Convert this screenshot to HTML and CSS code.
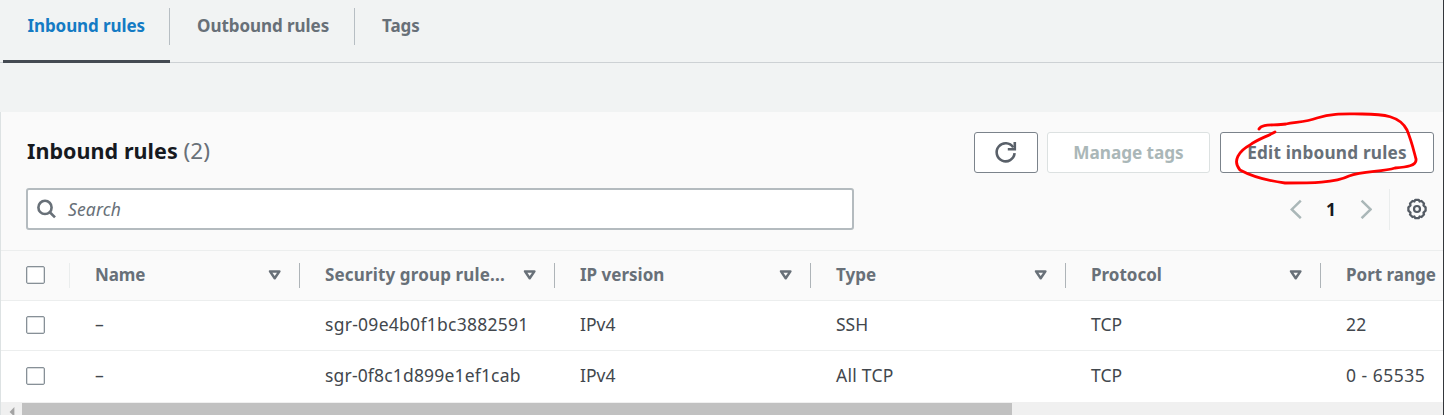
FILE: index.html
```html
<!DOCTYPE html>
<html lang="en">
<head>
<meta charset="utf-8">
<title>Inbound rules</title>
<link rel="stylesheet" href="styles.css">
</head>
<body>
<svg class="defs" width="0" height="0">
  <symbol id="sort" viewBox="0 0 14 12"><path d="M2 2.400h9.400L6.700 9.300z" fill="none" stroke="currentColor" stroke-width="2.500" stroke-linejoin="round"/></symbol>
</svg>
<div class="page">
  <nav class="tabs">
    <a class="tab tab-active">Inbound rules</a>
    <a class="tab tab-outbound">Outbound rules</a>
    <a class="tab tab-tags">Tags</a>
  </nav>
  <section class="panel">
    <header class="panel-head">
      <h2 class="title">Inbound rules <span class="count">(2)</span></h2>
      <div class="actions">
        <button class="btn btn-refresh" aria-label="Refresh"><svg width="24" height="24" viewBox="0 0 24 24" fill="none" stroke="currentColor" stroke-width="2.600"><path d="M20.600 13.200A9 9 0 1 1 19.200 7.400"/><path d="M20.800 2v7.200h-7"/></svg></button>
        <button class="btn btn-disabled">Manage tags</button>
        <button class="btn btn-edit">Edit inbound rules</button>
      </div>
    </header>
    <div class="filters">
      <div class="search">
        <svg width="20" height="20" viewBox="0 0 20 20" fill="none" stroke="currentColor" stroke-width="2.600"><circle cx="8" cy="8.400" r="6.600"/><path d="M12.600 13l5.400 5.400"/></svg>
        <span>Search</span>
      </div>
      <div class="pager">
        <svg class="arrow" width="12" height="20" viewBox="0 0 12 20"><path d="M10.800 1.600L1.800 10.400l9 8.800"/></svg>
        <b class="page-no">1</b>
        <svg class="arrow" width="12" height="20" viewBox="0 0 12 20"><path d="M1.600 1.600L10.600 10.400l-9 8.800"/></svg>
        <div class="prefs"><svg width="22" height="22" viewBox="0 0 22 22" fill="none" stroke="currentColor" stroke-width="2.300" stroke-linejoin="round"><path d="M9.300 1.800h3.400l.9 1.700 1.900-.5 2.500 2.500-.5 1.900 2.100 1.900v3.400l-2.100 1.900.5 1.900-2.500 2.500-1.900-.5-.9 1.700H9.300l-.9-1.700-1.900.5L4 16.500l.5-1.900-2.100-1.900V9.300l2.100-1.900L4 5.500 6.500 3l1.900.5z"/><circle cx="11" cy="11" r="3" stroke-width="2.200"/></svg></div>
      </div>
    </div>
    <div class="table">
      <div class="row head">
        <div class="cell check"><i class="box"></i></div>
        <div class="cell"><span class="tight">Name</span><svg class="sort"><use href="#sort"/></svg></div>
        <div class="cell"><span class="h-sgr">Security group rule...</span><svg class="sort"><use href="#sort"/></svg></div>
        <div class="cell"><span>IP version</span><svg class="sort"><use href="#sort"/></svg></div>
        <div class="cell"><span>Type</span><svg class="sort"><use href="#sort"/></svg></div>
        <div class="cell"><span>Protocol</span><svg class="sort"><use href="#sort"/></svg></div>
        <div class="cell last"><span>Port range</span></div>
      </div>
      <div class="row">
        <div class="cell check"><i class="box"></i></div>
        <div class="cell">–</div>
        <div class="cell wide">sgr-09e4b0f1bc3882591</div>
        <div class="cell">IPv4</div>
        <div class="cell">SSH</div>
        <div class="cell">TCP</div>
        <div class="cell wide">22</div>
      </div>
      <div class="row row-last">
        <div class="cell check"><i class="box"></i></div>
        <div class="cell">–</div>
        <div class="cell sgr-b">sgr-0f8c1d899e1ef1cab</div>
        <div class="cell">IPv4</div>
        <div class="cell wide">All TCP</div>
        <div class="cell">TCP</div>
        <div class="cell ports">0 - 65535</div>
      </div>
    </div>
    <div class="scrollbar"><svg width="22" height="13" viewBox="0 0 22 13"><path d="M14 4v10L9 9z" fill="#a3a3a3"/></svg><div class="thumb"></div></div>
  </section>
  <svg class="scribble" width="200" height="80" viewBox="1230 105 200 80"><path d="M1259 129C1262 123 1274 126 1286 124C1296 122 1306 122 1317 118C1333 113 1344 114 1362 114C1384 114 1400 116 1407 130C1412 142 1414 152 1416 159C1417 166 1406 167 1395 168C1382 172 1363 171 1349 176C1335 183 1311 183 1285 183C1270 181 1251 176 1240 170C1232 161 1239 151 1250 145C1258 139 1266 137 1275 132"/></svg>
</div>
</body>
</html>
```
FILE: styles.css
```css
* { box-sizing: border-box; }
body { margin: 0; font-family: "Noto Sans", sans-serif; font-size: 17.5px; color: #42474d; }
.defs { position: absolute; }
.page { position: relative; width: 1444px; height: 415px; overflow: hidden; background: #f1f3f3; border-right: 1px solid #34373b; display: flex; flex-direction: column; }
.tabs { display: flex; height: 63px; flex: none; border-bottom: 1px solid #cdd1d4; padding-left: 3px; font-size: 17px; font-weight: 700; letter-spacing: -.05px; color: #687078; }
.tab { position: relative; height: 62px; padding: 13px 25px 0 27px; line-height: 26px; white-space: nowrap; }
.tab-active { width: 167px; padding-left: 24.5px; color: #147bc4; border-bottom: 3px solid #444a52; height: 63px; letter-spacing: -.1px; }
.tab-outbound { width: 185px; }
.tab-active::after, .tab-outbound::after { content: ""; position: absolute; right: 0; top: 8px; width: 1px; height: 37px; background: #b7bec3; }
.panel { margin-top: 49px; flex: 1; background: #fafafa; border-left: 1px solid #dde2e3; display: flex; flex-direction: column; }
.panel-head { display: flex; justify-content: space-between; height: 76px; padding: 20px 9px 0 26px; }
.title { margin: 4px 0 0; font-size: 21.5px; line-height: 30px; font-weight: 700; color: #16191f; letter-spacing: .05px; white-space: nowrap; }
.count { font-weight: 400; font-size: 22.5px; color: #687078; }
.actions { display: flex; gap: 9px; }
.btn { display: flex; align-items: center; justify-content: center; height: 41px; padding: 0 0 1px; background: #fff; border: 1.5px solid #7b838b; border-radius: 3px; font: 700 17.2px "Noto Sans", sans-serif; white-space: nowrap; }
.btn-refresh { width: 64px; color: #596069; }
.btn-disabled { width: 163px; border-color: #dce1e1; color: #aab7b8; letter-spacing: -.05px; }
.btn-edit { width: 214px; margin-left: 1px; color: #687078; letter-spacing: .2px; }
.filters { display: flex; justify-content: space-between; height: 62px; padding: 0 0 0 25px; }
.search { display: flex; align-items: center; width: 828px; height: 42px; border: 2px solid #b4bbbf; border-radius: 3px; background: #fff; padding: 0 0 1px 9px; gap: 11px; color: #687078; font-style: italic; letter-spacing: .15px; }
.pager { display: flex; align-items: center; height: 42px; padding-right: 15px; }
.arrow { fill: none; stroke: #aab7b8; stroke-width: 2.5; }
.page-no { width: 58px; padding-bottom: 1px; text-align: center; color: #16191f; font-weight: 700; }
.prefs { display: flex; align-items: center; justify-content: flex-end; width: 56px; height: 42px; color: #545b64; }
.prefs::before { content: ""; width: 1px; height: 41px; margin-right: 16px; background: #eaeded; }
.table { flex: none; border-top: 1px solid #eceeee; }
.row { display: grid; grid-template-columns: 69px 230px 255px 256px 255px 255px 122px; height: 50px; background: #fff; border-bottom: 1px solid #eceeee; }
.row-last { height: 51px; border: 0; }
.head { background: #fafafa; font-size: 17px; font-weight: 700; color: #687078; }
.cell { position: relative; display: flex; align-items: center; justify-content: space-between; padding: 0 18px 3px 25px; white-space: nowrap; }
.head .cell { padding-bottom: 2px; }
.row-last .cell { padding-bottom: 4px; }
.row .cell.check { padding: 0 0 1px 25px; }
.row-last .cell.check { padding-bottom: 2px; }
.tight { letter-spacing: -.15px; }
.h-sgr { letter-spacing: .15px; }
.wide { letter-spacing: .27px; }
.sgr-b { letter-spacing: .17px; }
.ports { letter-spacing: .5px; }
.box { width: 19px; height: 18px; border: 1.5px solid #879097; border-radius: 2px; background: #fff; box-shadow: inset 0 0 0 .5px #b6bcc0; }
.head .cell::after { content: ""; position: absolute; right: 0; top: 12px; width: 1px; height: 25px; background: #aeb4b8; }
.head .check::after { background: #eaeded; }
.head .last::after { display: none; }
.sort { width: 14px; height: 12px; flex: none; }
.scrollbar { display: flex; height: 13px; background: #f0f0f0; padding-top: 1px; }
.scrollbar svg { flex: none; width: 21px; }
.thumb { width: 990px; background: #c1c1c1; }
.scribble { position: absolute; left: 1230px; top: 105px; fill: none; stroke: #f00; stroke-width: 2.8; stroke-linecap: round; stroke-linejoin: round; }
```
